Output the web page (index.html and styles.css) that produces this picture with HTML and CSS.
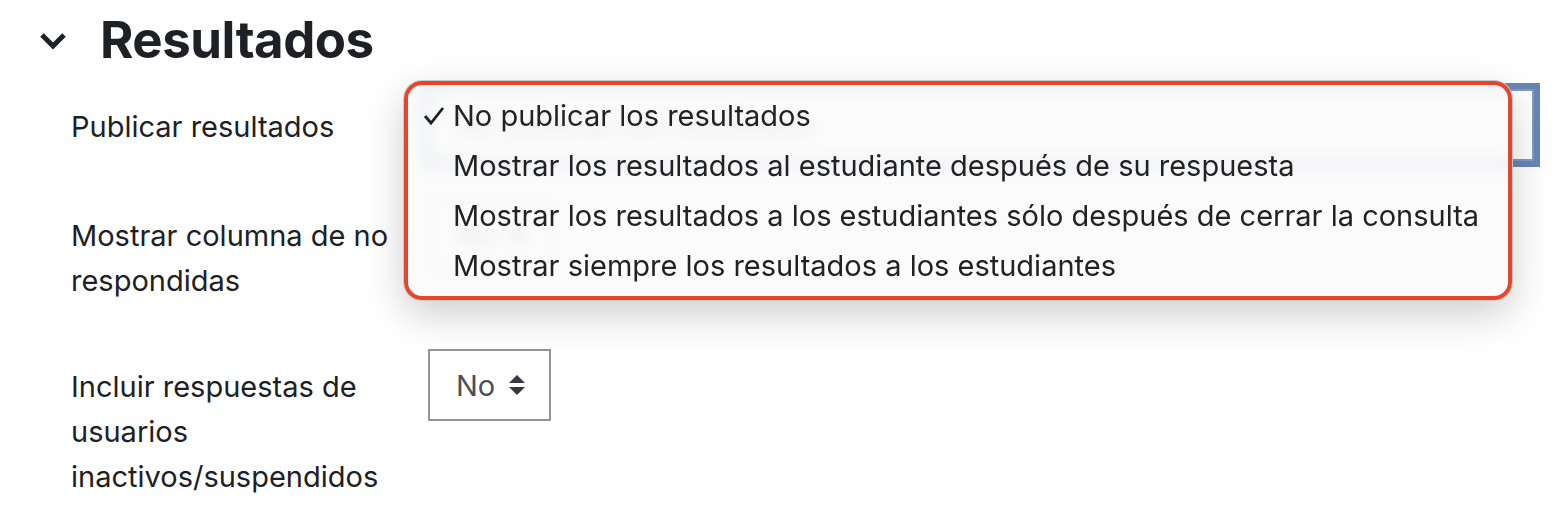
FILE: index.html
```html
<!DOCTYPE html>
<html lang="es">
<head>
  <meta charset="UTF-8">
  <meta name="viewport" content="width=device-width, initial-scale=1.0">
  <title>Resultados</title>
  <link rel="stylesheet" href="styles.css">
</head>
<body>

  <fieldset class="section">
    <div class="section-head">
      <svg class="chevron" width="30" height="20" viewBox="0 0 30 20">
        <polyline points="3,4 14,15 25,4" fill="none" stroke="#1d2125" stroke-width="5"/>
      </svg>
      <h2>Resultados</h2>
    </div>

    <div class="fitem fitem-first">
      <label class="flabel">Publicar resultados</label>
      <div class="fcontrol">
        <div class="select select-wide is-focused">
          <span>No publicar los resultados</span>
        </div>

        <!-- menú desplegable abierto -->
        <ul class="popup">
          <li class="popup-item is-checked">
            <svg class="check" width="22" height="20" viewBox="0 0 22 20">
              <polyline points="2,10 8,17 20,2" fill="none" stroke="#1d2125" stroke-width="2.8"/>
            </svg>
            No publicar los resultados
          </li>
          <li class="popup-item">Mostrar los resultados al estudiante después de su respuesta</li>
          <li class="popup-item">Mostrar los resultados a los estudiantes sólo después de cerrar la consulta</li>
          <li class="popup-item">Mostrar siempre los resultados a los estudiantes</li>
        </ul>
      </div>
    </div>

    <div class="fitem fitem-tall">
      <label class="flabel">Mostrar columna de no respondidas</label>
      <div class="fcontrol">
        <div class="select">
          <span>No</span>
          <svg class="arrows" width="16" height="20" viewBox="0 0 16 20">
            <polygon points="8,0 16,8 0,8" fill="#343a40"/>
            <polygon points="0,12 16,12 8,20" fill="#343a40"/>
          </svg>
        </div>
      </div>
    </div>

    <div class="fitem">
      <label class="flabel">Incluir respuestas de usuarios inactivos/suspendidos</label>
      <div class="fcontrol">
        <div class="select">
          <span>No</span>
          <svg class="arrows" width="16" height="20" viewBox="0 0 16 20">
            <polygon points="8,0 16,8 0,8" fill="#343a40"/>
            <polygon points="0,12 16,12 8,20" fill="#343a40"/>
          </svg>
        </div>
      </div>
    </div>
  </fieldset>

</body>
</html>
```

FILE: styles.css
```css
body {
  margin: 0;
  background-color: #ffffff;
  color: #1d2125;
  font-family: Inter, "Noto Sans", sans-serif;
  font-size: 29px;
  overflow: hidden;
}

.section {
  margin: 0;
  padding: 0;
  border: none;
}

.section-head {
  display: flex;
  align-items: center;
  height: 78px;
  padding-left: 39px;
}

.chevron {
  margin-right: 31px;
  margin-top: 4px;
}

h2 {
  margin: 0;
  font-size: 51px;
  font-weight: 700;
  letter-spacing: -0.5px;
}

.fitem {
  display: flex;
  align-items: flex-start;
  margin-bottom: 42px;
}

.fitem-first {
  margin-top: 11px;
  margin-bottom: 37px;
}

.fitem-tall {
  margin-bottom: 46px;
}

.flabel {
  width: 330px;
  padding: 15px 0 0 71px;
  line-height: 45px;
  flex-shrink: 0;
}

.fcontrol {
  position: relative;
  margin-left: 27px;
}

.select {
  display: flex;
  align-items: center;
  gap: 14px;
  height: 72px;
  padding: 0 24px 0 26px;
  border: 2px solid #8f959e;
  box-sizing: border-box;
  color: #495057;
  background-color: #ffffff;
}

.select-wide {
  width: 1106px;
}

.is-focused {
  border-color: #7f9ac4;
  box-shadow: 0 0 0 6px #6a86b4;
}

.popup {
  position: absolute;
  z-index: 10;
  left: -24px;
  top: -8px;
  width: 1108px;
  height: 219px;
  margin: 0;
  padding: 6px 0 0 0;
  list-style: none;
  box-sizing: border-box;
  border: 4px solid #e8442b;
  border-radius: 18px;
  background-color: rgba(251, 251, 251, 0.88);
  backdrop-filter: blur(8px);
  box-shadow: 0 0 0 1px #c9c9c9, 0 14px 40px rgba(0, 0, 0, 0.2);
  color: #222222;
}

.popup-item {
  position: relative;
  padding-left: 45px;
  line-height: 50px;
  white-space: nowrap;
}

.check {
  position: absolute;
  left: 15px;
  top: 15px;
}
```
